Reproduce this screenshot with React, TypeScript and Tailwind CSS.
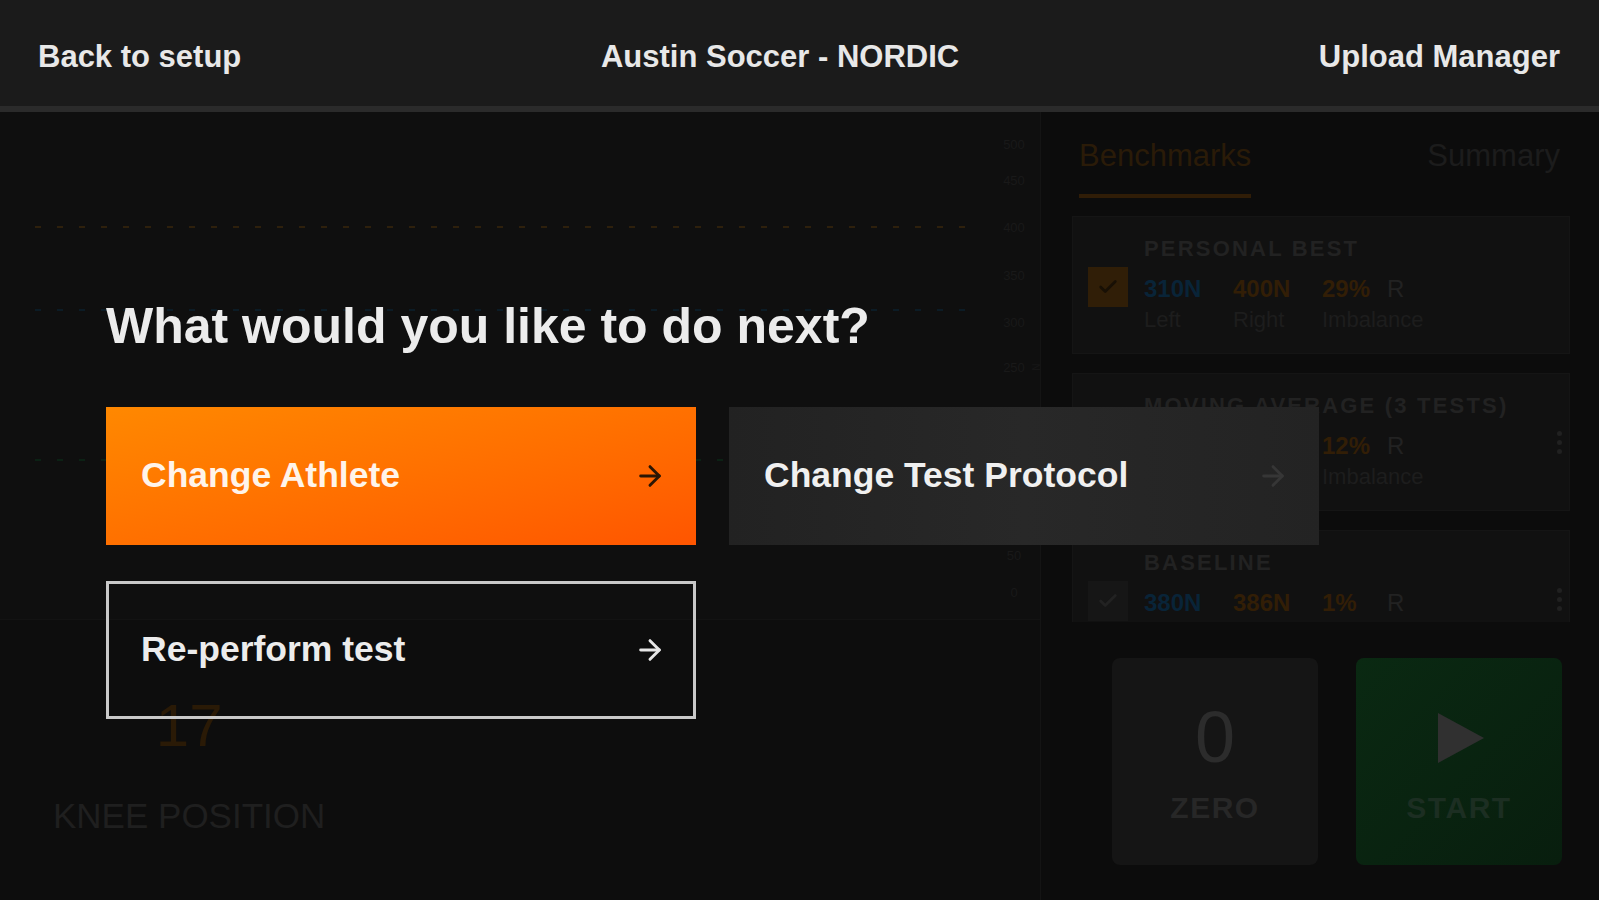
import { ArrowRight, Check } from 'lucide-react'

// only the labels that are not hidden behind the prompt buttons
const AXIS_LABELS: [string, number][] = [
  ['500', 32],
  ['450', 68],
  ['400', 115],
  ['350', 163],
  ['300', 210],
  ['250', 255],
  ['50', 443],
  ['0', 480],
]

function Chart() {
  return (
    <svg width="1040" height="508" viewBox="0 0 1040 508" className="block">
      <line x1="35" y1="115" x2="965" y2="115" stroke="#2e200c" strokeWidth="2" strokeDasharray="6 16" />
      <line x1="35" y1="198" x2="965" y2="198" stroke="#0c1c26" strokeWidth="2" strokeDasharray="6 16" />
      <line x1="35" y1="348" x2="965" y2="348" stroke="#0c2215" strokeWidth="2" strokeDasharray="6 16" />
      {AXIS_LABELS.map(([label, y]) => (
        <text
          key={label}
          x="1014"
          y={y + 5}
          textAnchor="middle"
          fontSize="13"
          fill="#191919"
          fontFamily="Liberation Sans, sans-serif"
        >
          {label}
        </text>
      ))}
      <text
        x="1032"
        y="255"
        fontSize="10"
        fill="#161616"
        textAnchor="middle"
        transform="rotate(90 1032 255)"
        fontFamily="Liberation Sans, sans-serif"
      >
        N
      </text>
    </svg>
  )
}

function Kebab() {
  return (
    <div className="flex flex-col gap-[4px] items-center">
      <span className="w-[5px] h-[5px] rounded-full bg-[#212121]" />
      <span className="w-[5px] h-[5px] rounded-full bg-[#212121]" />
      <span className="w-[5px] h-[5px] rounded-full bg-[#212121]" />
    </div>
  )
}

interface BenchmarkProps {
  title: string;
  left: string;
  right: string;
  imbalance: string;
  checked: boolean;
  menu: boolean;
  labels?: boolean;
}

function BenchmarkCard({ title, left, right, imbalance, checked, menu, labels = true }: BenchmarkProps) {
  return (
    <div className="h-[138px] shrink-0 bg-[#111111] border border-[#151515] flex items-start pl-[15px]">
      <div
        className={
          checked
            ? 'mt-[50px] w-10 h-10 bg-[#301e07] flex items-center justify-center'
            : 'mt-[50px] w-10 h-10 bg-[#161616] flex items-center justify-center'
        }
      >
        <Check size={22} strokeWidth={3} color={checked ? '#181005' : '#222222'} />
      </div>
      <div className="ml-[16px] pt-[21px] flex-1">
        <div className="text-[22px] leading-none font-bold tracking-[0.1em] text-[#222222]">{title}</div>
        <div className="mt-[17px] flex text-[24px] leading-none font-bold">
          <span className="w-[89px] text-[#092438]">{left}</span>
          <span className="w-[89px] text-[#321e06]">{right}</span>
          <span className="w-[65px] text-[#321e06]">{imbalance}</span>
          <span className="text-[#222222] font-normal">R</span>
        </div>
        {labels && (
          <div className="mt-[8px] flex text-[22px] leading-none text-[#1d1d1d]">
            <span className="w-[89px]">Left</span>
            <span className="w-[89px]">Right</span>
            <span>Imbalance</span>
          </div>
        )}
      </div>
      {menu && (
        <div className="self-center w-[20px] flex justify-center">
          <Kebab />
        </div>
      )}
    </div>
  )
}

export default function App() {
  return (
    <div
      className="w-[1599px] h-[900px] bg-[#0d0d0d] overflow-hidden"
      style={{ fontFamily: '"Liberation Sans", Arial, sans-serif' }}
    >
      <header className="h-[112px] bg-[#1b1b1b] border-b-[6px] border-[#2b2b2b] flex items-center justify-between pl-[38px] pr-[39px] pt-2 text-[31px] font-bold text-[#e8e8e8]">
        <span>Back to setup</span>
        <span>Austin Soccer - NORDIC</span>
        <span>Upload Manager</span>
      </header>

      <div className="relative h-[788px] flex">
        {/* dimmed test screen behind the prompt */}
        <div className="w-[1040px] flex flex-col">
          <div className="h-[508px] bg-[#0f0f0f] border-b border-[#131313]">
            <Chart />
          </div>
          <div className="flex-1 pl-[53px] pt-[76px]">
            <div className="w-fit flex flex-col items-center">
              <div className="text-[60px] leading-none text-[#2a1a06]">17</div>
              <div className="mt-[42px] text-[35px] leading-none text-[#1f1f1f]">KNEE POSITION</div>
            </div>
          </div>
        </div>

        <div className="w-[559px] flex flex-col border-l border-[#141414] bg-[#0c0c0c]">
          <div className="flex justify-between pl-[38px] pr-[39px] pt-[28px]">
            <div className="flex flex-col">
              <span className="text-[31px] leading-none text-[#2a1b08]">Benchmarks</span>
              <span className="mt-[23px] h-[4px] bg-[#301d07]" />
            </div>
            <span className="text-[31px] leading-none text-[#1c1c1c]">Summary</span>
          </div>
          <div className="mt-[18px] h-[406px] overflow-hidden pl-[31px] pr-[29px] flex flex-col gap-[19px]">
            <BenchmarkCard title="PERSONAL BEST" left="310N" right="400N" imbalance="29%" checked menu={false} />
            <BenchmarkCard title="MOVING AVERAGE (3 TESTS)" left="352N" right="395N" imbalance="12%" checked menu />
            <BenchmarkCard title="BASELINE" left="380N" right="386N" imbalance="1%" checked={false} menu labels={false} />
          </div>
          <div className="mt-[36px] flex justify-end gap-[38px] pr-[37px]">
            <div className="w-[206px] h-[207px] rounded-lg bg-[#151515] flex flex-col items-center pt-[43px]">
              <span className="text-[72px] leading-none text-[#2c2c2c]">0</span>
              <span className="mt-[20px] text-[30px] leading-none font-bold tracking-wider text-[#272727]">ZERO</span>
            </div>
            <div className="w-[206px] h-[207px] rounded-lg bg-linear-to-br from-[#0a2912] to-[#081e0e] flex flex-col items-center pt-[55px]">
              <svg width="50" height="50" viewBox="0 0 50 50">
                <polygon points="4,0 50,25 4,50" fill="#303030" />
              </svg>
              <span className="mt-[30px] text-[30px] leading-none font-bold tracking-wider text-[#1c2e22]">START</span>
            </div>
          </div>
        </div>

        {/* prompt */}
        <div className="absolute inset-0 pl-[106px] pt-[189px]">
          <h1 className="text-[50px] leading-none font-bold text-[#ececec]">What would you like to do next?</h1>
          <div className="mt-[56px] grid grid-cols-[590px_590px] auto-rows-[138px] gap-x-[33px] gap-y-[36px]">
            <button className="flex items-center justify-between pl-[35px] pr-[30px] bg-linear-to-br from-[#ff8800] to-[#ff5500] text-[35.5px] font-bold text-[#fff4ea]">
              <span>Change Athlete</span>
              <ArrowRight size={32} strokeWidth={2.2} color="#2b1604" />
            </button>
            <button className="flex items-center justify-between pl-[35px] pr-[30px] bg-linear-to-r from-[#222222] via-[#282828] to-[#232323] text-[35.5px] font-bold text-[#f0f0f0]">
              <span>Change Test Protocol</span>
              <ArrowRight size={32} strokeWidth={2.2} color="#363636" />
            </button>
            <button className="flex items-center justify-between pl-[32px] pr-[27px] border-[3px] border-[#c9c9c9] text-[35.5px] font-bold text-[#ececec]">
              <span>Re-perform test</span>
              <ArrowRight size={32} strokeWidth={2.2} color="#e6e6e6" />
            </button>
          </div>
        </div>
      </div>
    </div>
  )
}
